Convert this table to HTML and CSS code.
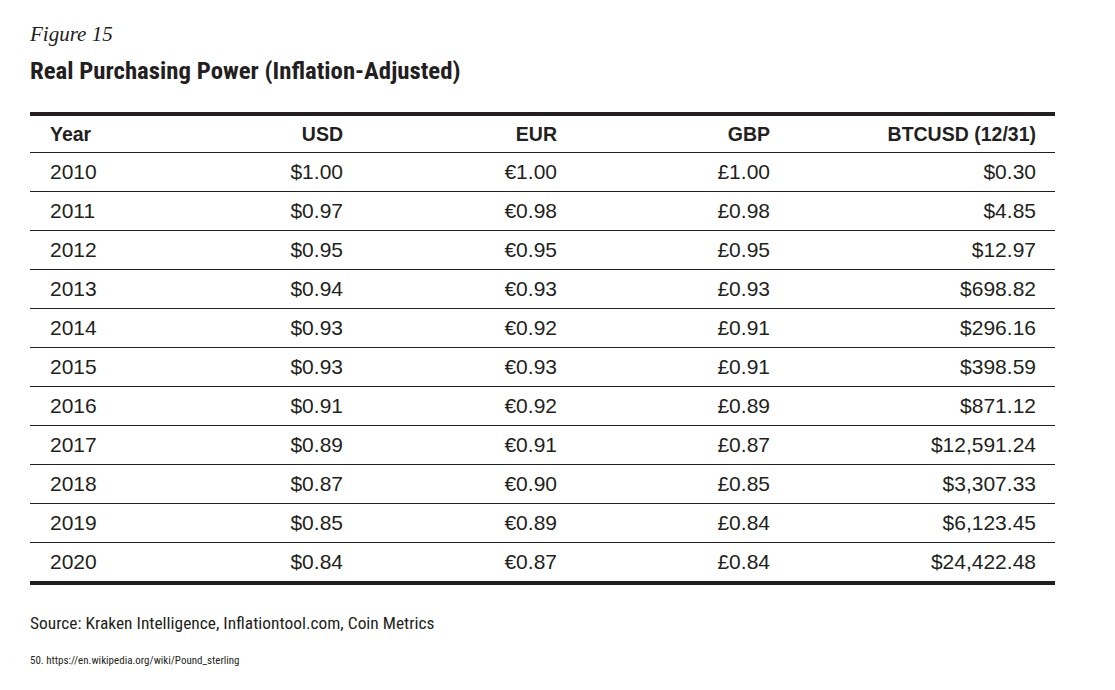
FILE: index.html
```html
<!DOCTYPE html>
<html>
<head>
<meta charset="utf-8">
<link rel="stylesheet" href="styles.css">
</head>
<body>
<div class="page">
  <div class="fig">Figure 15</div>
  <h1 class="title">Real Purchasing Power (Inflation-Adjusted)</h1>
  <table class="data">
    <colgroup>
      <col class="c1"><col class="c2"><col class="c3"><col class="c4"><col class="c5">
    </colgroup>
    <thead>
      <tr><th class="l">Year</th><th>USD</th><th>EUR</th><th>GBP</th><th>BTCUSD (12/31)</th></tr>
    </thead>
    <tbody>
      <tr><td class="l">2010</td><td>$1.00</td><td>€1.00</td><td>£1.00</td><td>$0.30</td></tr>
      <tr><td class="l">2011</td><td>$0.97</td><td>€0.98</td><td>£0.98</td><td>$4.85</td></tr>
      <tr><td class="l">2012</td><td>$0.95</td><td>€0.95</td><td>£0.95</td><td>$12.97</td></tr>
      <tr><td class="l">2013</td><td>$0.94</td><td>€0.93</td><td>£0.93</td><td>$698.82</td></tr>
      <tr><td class="l">2014</td><td>$0.93</td><td>€0.92</td><td>£0.91</td><td>$296.16</td></tr>
      <tr><td class="l">2015</td><td>$0.93</td><td>€0.93</td><td>£0.91</td><td>$398.59</td></tr>
      <tr><td class="l">2016</td><td>$0.91</td><td>€0.92</td><td>£0.89</td><td>$871.12</td></tr>
      <tr><td class="l">2017</td><td>$0.89</td><td>€0.91</td><td>£0.87</td><td>$12,591.24</td></tr>
      <tr><td class="l">2018</td><td>$0.87</td><td>€0.90</td><td>£0.85</td><td>$3,307.33</td></tr>
      <tr><td class="l">2019</td><td>$0.85</td><td>€0.89</td><td>£0.84</td><td>$6,123.45</td></tr>
      <tr><td class="l">2020</td><td>$0.84</td><td>€0.87</td><td>£0.84</td><td>$24,422.48</td></tr>
    </tbody>
  </table>
  <p class="source">Source: Kraken Intelligence, Inflationtool.com, Coin Metrics</p>
  <p class="note">50. https://en.wikipedia.org/wiki/Pound_sterling</p>
</div>
</body>
</html>
```

FILE: styles.css
```css
html, body {
  margin: 0;
  padding: 0;
  background: #ffffff;
}
.page {
  padding: 22px 0 0 30px;
  width: 1025px;
  color: #231f20;
}
.fig {
  font-family: "Liberation Serif", serif;
  font-style: italic;
  font-size: 21px;
  line-height: 24px;
  color: #231f20;
}
.title {
  margin: 10px 0 0 0;
  font-family: "Roboto Condensed", Roboto, sans-serif;
  font-weight: 700;
  font-size: 24.8px;
  line-height: 30px;
  white-space: nowrap;
}
.data {
  margin-top: 26px;
  width: 1025px;
  border-collapse: collapse;
  table-layout: fixed;
  border-top: 4px solid #231f20;
  border-bottom: 4px solid #231f20;
  font-family: "Liberation Sans", Arial, sans-serif;
}
.c1 { width: 119px; }
.c2 { width: 213px; }
.c3 { width: 214px; }
.c4 { width: 213px; }
.c5 { width: 266px; }
.data th, .data td {
  text-align: right;
  padding: 0 19px 0 0;
  white-space: nowrap;
}
.data th.l, .data td.l {
  text-align: left;
  padding: 0 0 0 20px;
}
.data th {
  height: 36px;
  font-size: 19.5px;
  font-weight: 700;
  border-bottom: 1.5px solid #231f20;
}
.data td {
  height: 38px;
  font-size: 21px;
  font-weight: 400;
}
.data tbody tr + tr td {
  border-top: 1.5px solid #231f20;
}
.source {
  margin: 27px 0 0 0;
  font-family: "Roboto Condensed", Roboto, sans-serif;
  font-size: 17.4px;
  line-height: 22px;
}
.note {
  margin: 20px 0 0 0;
  font-family: "Roboto Condensed", Roboto, sans-serif;
  font-size: 11px;
  line-height: 14px;
}
```
